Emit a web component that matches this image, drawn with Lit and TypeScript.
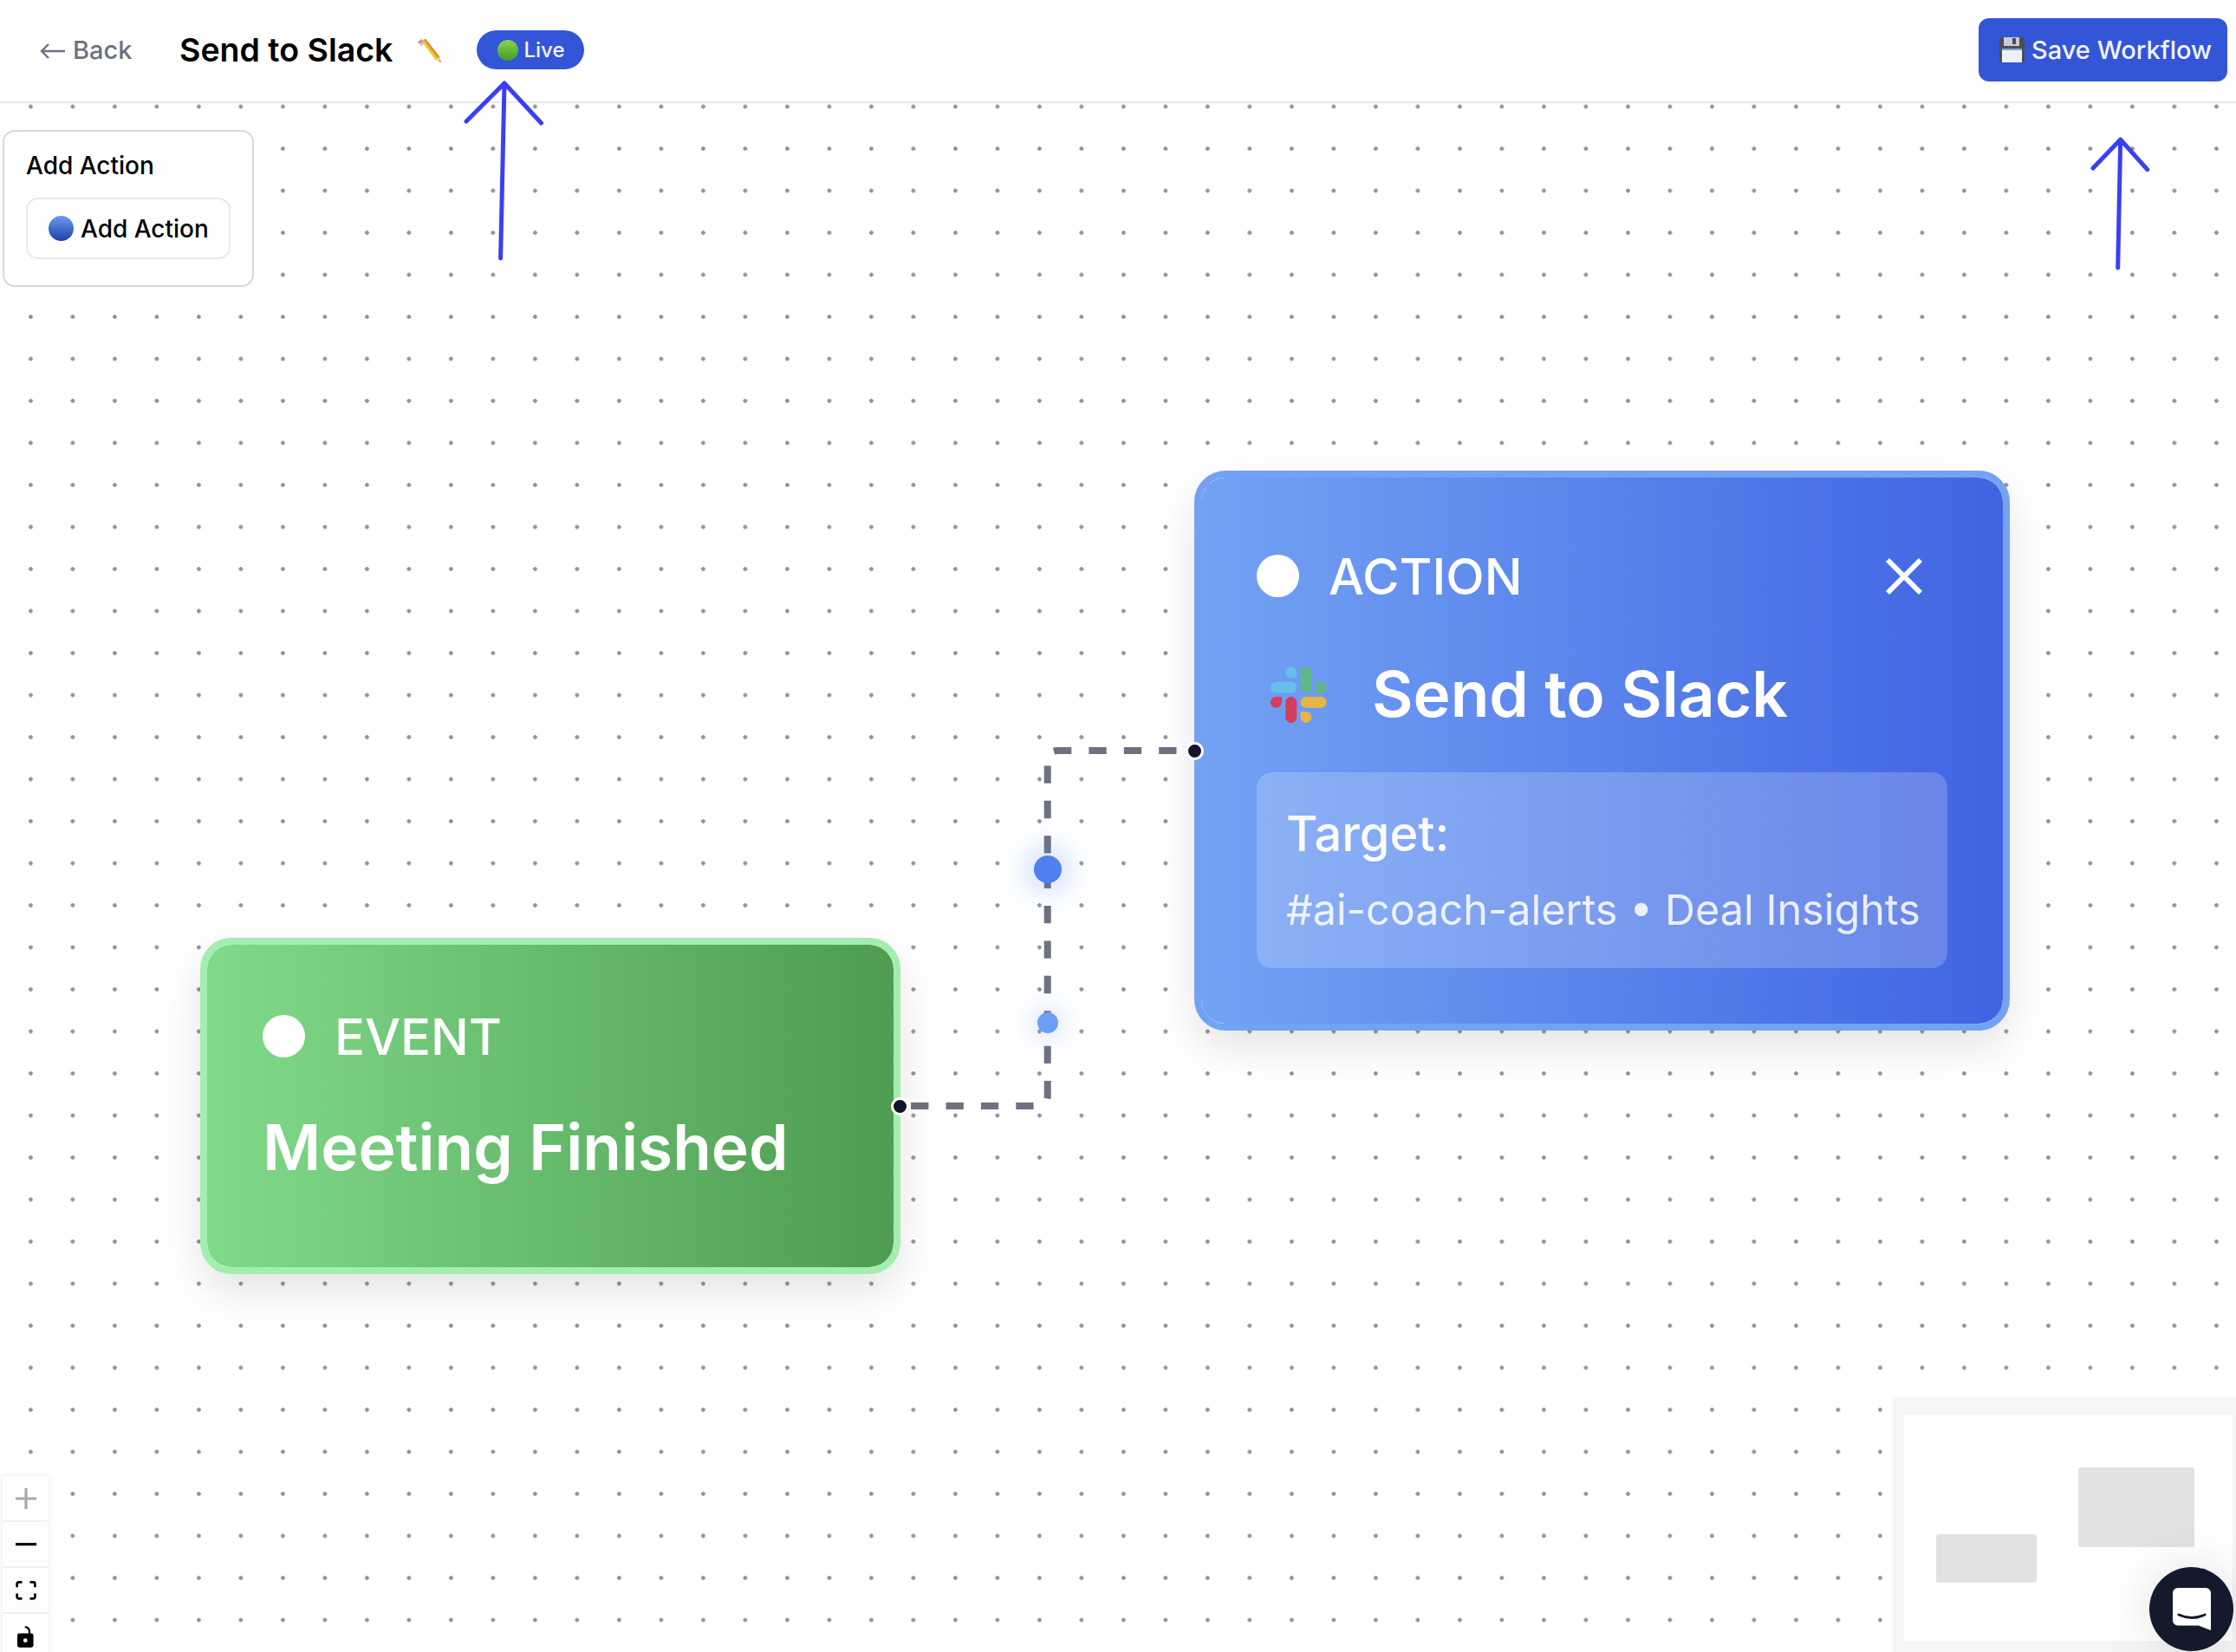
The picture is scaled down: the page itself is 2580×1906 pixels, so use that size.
import { LitElement, html, css, svg } from "lit";
import { customElement } from "lit/decorators.js";

const TOP = 119;
const edgePath = `M1038.7 ${1276 - TOP} H1196.7 Q1208.7 ${1276 - TOP} 1208.7 ${1264 - TOP} V${878 - TOP} Q1208.7 ${866 - TOP} 1220.7 ${866 - TOP} H1378.3`;

const slack = html`<svg class="slack" viewBox="0 0 54 54" aria-hidden="true">
  <path fill="#66bfea" d="M19.712.133a5.381 5.381 0 0 0-5.376 5.387 5.381 5.381 0 0 0 5.376 5.386h5.376V5.52A5.381 5.381 0 0 0 19.712.133m0 14.365H5.376A5.381 5.381 0 0 0 0 19.884a5.381 5.381 0 0 0 5.376 5.387h14.336a5.381 5.381 0 0 0 5.376-5.387 5.381 5.381 0 0 0-5.376-5.386"/>
  <path fill="#5cb887" d="M53.76 19.884a5.381 5.381 0 0 0-5.376-5.386 5.381 5.381 0 0 0-5.376 5.386v5.387h5.376a5.381 5.381 0 0 0 5.376-5.387m-14.336 0V5.52A5.381 5.381 0 0 0 34.048.133a5.381 5.381 0 0 0-5.376 5.387v14.364a5.381 5.381 0 0 0 5.376 5.387 5.381 5.381 0 0 0 5.376-5.387"/>
  <path fill="#e5b546" d="M34.048 54a5.381 5.381 0 0 0 5.376-5.387 5.381 5.381 0 0 0-5.376-5.386h-5.376v5.386A5.381 5.381 0 0 0 34.048 54m0-14.365h14.336a5.381 5.381 0 0 0 5.376-5.386 5.381 5.381 0 0 0-5.376-5.387H34.048a5.381 5.381 0 0 0-5.376 5.387 5.381 5.381 0 0 0 5.376 5.386"/>
  <path fill="#d43d5e" d="M0 34.249a5.381 5.381 0 0 0 5.376 5.386 5.381 5.381 0 0 0 5.376-5.386v-5.387H5.376A5.381 5.381 0 0 0 0 34.25m14.336-.001v14.364A5.381 5.381 0 0 0 19.712 54a5.381 5.381 0 0 0 5.376-5.387V34.25a5.381 5.381 0 0 0-5.376-5.387 5.381 5.381 0 0 0-5.376 5.387"/>
</svg>`;

const pencil = html`<svg class="pencil" viewBox="0 0 28 28" aria-hidden="true">
  <path fill="#f4c430" d="M5.5 3.5 L10 .8 L26 21 L27.5 27.5 L21.5 25 Z"/>
  <path fill="#d9932a" d="M8 2 L10 .8 L26 21 L27.5 27.5 Z"/>
  <path fill="#e8838e" d="M1 4.5 L5.5 1 L7.5 3.4 L3 7 Z"/>
  <path fill="#c4c7cc" d="M3 7 L7.5 3.4 L9.5 5.8 L5 9.4 Z"/>
  <path fill="#f4d9a8" d="M22.5 24.8 L26 21.6 L27.5 27.5 Z"/>
  <path fill="#333" d="M25.7 26.5 L27 25.4 L27.5 27.5 Z"/>
</svg>`;

const floppy = html`<svg class="floppy" viewBox="0 0 29 29" aria-hidden="true">
  <rect width="29" height="29" rx="1" fill="#4b4e56"/>
  <rect x="5" y="0" width="18" height="10" fill="#c9cbd0"/>
  <rect x="15" y="1" width="4" height="7" fill="#4b4e56"/>
  <rect x="3" y="13" width="23" height="16" fill="#eef0f3"/>
  <rect x="3" y="13" width="23" height="2" fill="#86a5d8"/>
</svg>`;

@customElement("app-root")
export class AppRoot extends LitElement {
  static styles = css`
    :host {
      display: flex;
      flex-direction: column;
      position: relative;
      width: 100vw;
      height: 100vh;
      overflow: hidden;
      background: #fff;
      font-family: Inter, "Liberation Sans", sans-serif;
      color: #000;
    }
    .header {
      flex: none;
      box-sizing: border-box;
      height: 119px;
      border-bottom: 2px solid #e8e8ea;
      padding: 0 10px 2px 46px;
      display: flex;
      align-items: center;
      background: #fff;
    }
    .back {
      display: flex;
      align-items: center;
      gap: 8px;
      font-size: 29px;
      font-weight: 500;
      color: #6b7280;
      width: 161px;
    }
    .back svg { width: 30px; height: 20px; margin-top: 3px; }
    .title {
      font-size: 37.5px;
      font-weight: 600;
      line-height: 1;
    }
    .pencil { width: 28px; height: 28px; margin-left: 28px; }
    .live {
      margin-left: 41px;
      box-sizing: border-box;
      height: 45px;
      width: 124px;
      border-radius: 23px;
      background: #3355d8;
      color: #f2f4ff;
      font-size: 24px;
      font-weight: 500;
      display: flex;
      align-items: center;
      padding-left: 24px;
      gap: 6px;
    }
    .emoji { flex: none; border-radius: 50%; display: block; }
    .emoji.green { width: 24px; height: 24px; background: linear-gradient(180deg, #8bd44a, #3f9a25); }
    .emoji.blue { width: 29px; height: 29px; background: linear-gradient(180deg, #6b9bf2, #1e3fa8); }
    .save {
      margin-left: auto;
      box-sizing: border-box;
      height: 73px;
      width: 287px;
      border-radius: 12px;
      background: #3355d8;
      color: #f2f4ff;
      font-size: 29px;
      font-weight: 500;
      display: flex;
      align-items: center;
      padding-left: 24px;
      gap: 8px;
    }
    .floppy { width: 29px; height: 29px; flex: none; }
    .canvas {
      flex: 1;
      position: relative;
      overflow: hidden;
      background-color: #fff;
      background-image: radial-gradient(circle, #92929a 2px, rgba(146, 146, 154, 0) 2.6px);
      background-size: 48.5px 48.5px;
      background-position: 11.15px -20.25px;
    }
    .edges {
      position: absolute;
      left: 0;
      top: 0;
      width: 2580px;
      height: 1787px;
      overflow: visible;
    }
    .edge { fill: none; stroke: #6e7280; stroke-width: 8; stroke-dasharray: 20.3 20.1; stroke-dashoffset: 28; }
    .node {
      position: absolute;
      box-sizing: border-box;
      border-radius: 36px;
      border: 8px solid;
      padding: 64px 64px 0;
      color: #fff;
      box-shadow: 0 20px 50px rgba(0, 0, 0, 0.11);
    }
    .node.event {
      left: 231px;
      top: 963px;
      width: 808px;
      height: 388px;
      border-color: #a3edb0;
      background: linear-gradient(90deg, #80da8a, #4e9c50) padding-box;
    }
    .node.action {
      left: 1378px;
      top: 424px;
      width: 941px;
      height: 646px;
      border-color: #73a2f4;
      background: linear-gradient(90deg, #73a2f4, #4064e2) padding-box;
    }
    .row { display: flex; align-items: center; gap: 34px; height: 83px; }
    .action .row { height: 99px; }
    .bullet { width: 49px; height: 49px; border-radius: 50%; background: #fff; flex: none; }
    .kind { font-size: 58px; font-weight: 500; line-height: 1; }
    .close { margin-left: auto; margin-right: 28px; width: 44px; height: 44px; display: block; }
    .name {
      margin-top: 36px;
      font-size: 73px;
      font-weight: 600;
      line-height: 102px;
    }
    .name-row { display: flex; align-items: center; gap: 52px; margin-top: 36px; padding-left: 16px; }
    .name-row .name { margin-top: 0; }
    .slack { width: 65px; height: 65px; flex: none; }
    .target {
      margin-top: 39px;
      box-sizing: border-box;
      height: 226px;
      border-radius: 18px;
      background: rgba(255, 255, 255, 0.2);
      padding: 32px 34px 0;
    }
    .target-label { font-size: 56px; font-weight: 500; line-height: 78px; color: rgba(255, 255, 255, 0.95); }
    .target-value { margin-top: 15px; font-size: 48.5px; line-height: 68px; color: rgba(255, 255, 255, 0.85); white-space: nowrap; }
    .handle {
      position: absolute;
      box-sizing: border-box;
      width: 21px;
      height: 21px;
      border-radius: 50%;
      background: #14142a;
      border: 3px solid #fff;
    }
    .handle.out { left: 1028.2px; top: 1146.5px; }
    .handle.in { left: 1367.8px; top: 736.5px; }
    .pulse { position: absolute; border-radius: 50%; }
    .pulse.one {
      left: 1192.5px;
      top: 868px;
      width: 32.4px;
      height: 32.4px;
      background: #5080f0;
      box-shadow: 0 0 36px 6px rgba(80, 128, 240, 0.38);
    }
    .pulse.two {
      left: 1196.7px;
      top: 1049.3px;
      width: 24px;
      height: 24px;
      background: #6c9ff4;
      box-shadow: 0 0 28px 5px rgba(108, 159, 244, 0.32);
    }
    .panel {
      position: absolute;
      left: 3px;
      top: 31px;
      box-sizing: border-box;
      width: 290px;
      height: 181px;
      background: #fff;
      border: 2px solid #d6d7df;
      border-radius: 14px;
      padding: 14px 25px 0;
    }
    .panel-title { font-size: 28px; font-weight: 500; line-height: 50px; }
    .panel-btn {
      margin-top: 12px;
      box-sizing: border-box;
      height: 71px;
      width: 236px;
      border: 2px solid #e6e8f0;
      border-radius: 14px;
      display: flex;
      align-items: center;
      padding-left: 24px;
      gap: 8px;
      font-size: 28px;
      font-weight: 500;
    }
    .controls {
      position: absolute;
      left: 3px;
      top: 1584px;
      width: 53px;
      box-shadow: 0 0 6px rgba(0, 0, 0, 0.1);
      background: #fdfdfd;
    }
    .ctrl {
      box-sizing: border-box;
      height: 53px;
      border-bottom: 2px solid #f0f0f0;
      display: flex;
      align-items: center;
      justify-content: center;
    }
    .ctrl svg { display: block; fill: #000; }
    .ctrl .plus { width: 24px; height: 24px; fill: #a8a8a8; }
    .ctrl .minus { width: 24px; height: 4px; }
    .ctrl .fit { width: 24px; height: 22px; }
    .ctrl .lock { width: 19px; height: 25px; margin-top: 2px; }
    .minimap {
      position: absolute;
      right: 0;
      bottom: 0;
      box-sizing: border-box;
      width: 396px;
      height: 294px;
      background: #f5f5f5;
      padding: 21px 4px 13px 13px;
    }
    .minimap-inner {
      position: relative;
      width: 100%;
      height: 100%;
      background: #fff;
    }
    .mini { position: absolute; background: #e2e2e2; border-radius: 3px; }
    .mini.a { left: 37px; top: 137px; width: 116px; height: 56px; }
    .mini.b { left: 201px; top: 60px; width: 134px; height: 92px; }
    .chat {
      position: absolute;
      right: 3px;
      bottom: 1.5px;
      width: 97px;
      height: 97px;
      border-radius: 50%;
      background: #141a2b;
      box-shadow: 0 0 60px rgba(0, 0, 0, 0.13);
      display: flex;
      align-items: center;
      justify-content: center;
    }
    .chat svg { width: 44px; height: 49px; display: block; }
    .arrows {
      position: absolute;
      left: 0;
      top: 0;
      width: 2580px;
      height: 1906px;
      pointer-events: none;
    }
    .arrows path { fill: none; stroke: #3a3ff5; stroke-width: 5; stroke-linecap: round; stroke-linejoin: round; }
  `;

  render() {
    return html`
      <header class="header">
        <div class="back">
          <svg viewBox="0 0 30 20" aria-hidden="true"><path d="M29 10 H2 M10 2 L2 10 L10 18" fill="none" stroke="#6b7280" stroke-width="2.4"/></svg>
          <span>Back</span>
        </div>
        <div class="title">Send to Slack</div>
        ${pencil}
        <div class="live"><i class="emoji green"></i><span>Live</span></div>
        <div class="save">${floppy}<span>Save Workflow</span></div>
      </header>
      <main class="canvas">
        <svg class="edges" viewBox="0 0 2580 1787" aria-hidden="true">
          ${svg`<path class="edge" d=${edgePath}></path>`}
        </svg>
        <section class="node event">
          <div class="row"><span class="bullet"></span><span class="kind">EVENT</span></div>
          <div class="name">Meeting Finished</div>
        </section>
        <section class="node action">
          <div class="row">
            <span class="bullet"></span><span class="kind">ACTION</span>
            <svg class="close" viewBox="0 0 44 44" aria-hidden="true"><path d="M3 3 L41 41 M41 3 L3 41" stroke="#fff" stroke-width="6" fill="none"/></svg>
          </div>
          <div class="name-row">${slack}<div class="name">Send to Slack</div></div>
          <div class="target">
            <div class="target-label">Target:</div>
            <div class="target-value">#ai-coach-alerts • Deal Insights</div>
          </div>
        </section>
        <span class="handle out"></span>
        <span class="handle in"></span>
        <span class="pulse one"></span>
        <span class="pulse two"></span>
        <aside class="panel">
          <div class="panel-title">Add Action</div>
          <div class="panel-btn"><i class="emoji blue"></i><span>Add Action</span></div>
        </aside>
        <nav class="controls">
          <div class="ctrl"><svg class="plus" viewBox="0 0 32 32"><path d="M32 18.133H18.133V32h-4.266V18.133H0v-4.266h13.867V0h4.266v13.867H32z"/></svg></div>
          <div class="ctrl"><svg class="minus" viewBox="0 0 32 5"><path d="M0 0h32v4.2H0z"/></svg></div>
          <div class="ctrl"><svg class="fit" viewBox="0 0 32 30"><path d="M3.692 4.63c0-.53.4-.938.939-.938h5.215V0H4.708C2.13 0 0 2.054 0 4.63v5.216h3.692V4.631zM27.354 0h-5.2v3.692h5.17c.53 0 .984.4.984.939v5.215H32V4.631A4.624 4.624 0 0027.354 0zm.954 24.83c0 .532-.4.94-.939.94h-5.215v3.768h5.215c2.577 0 4.631-2.13 4.631-4.707v-5.139h-3.692v5.139zm-23.677.94c-.531 0-.939-.4-.939-.94v-5.138H0v5.139c0 2.577 2.13 4.707 4.708 4.707h5.138V25.77H4.631z"/></svg></div>
          <div class="ctrl"><svg class="lock" viewBox="0 0 25 32"><path d="M21.333 10.667H19.81V7.619C19.81 3.429 16.38 0 12.19 0c-1.714 0-1.37 2.133.305 2.438 1.676.305 4.42 2.59 4.42 5.181v3.048H3.047A3.056 3.056 0 000 13.714v15.238A3.056 3.056 0 003.048 32h18.285a3.056 3.056 0 003.048-3.048V13.714a3.056 3.056 0 00-3.048-3.047zM12.19 24.533a3.056 3.056 0 01-3.047-3.047 3.056 3.056 0 013.047-3.048 3.056 3.056 0 013.048 3.048 3.056 3.056 0 01-3.048 3.047z"/></svg></div>
        </nav>
        <div class="minimap">
          <div class="minimap-inner"><span class="mini a"></span><span class="mini b"></span></div>
        </div>
        <div class="chat">
          <svg viewBox="0 0 44 49" aria-hidden="true">
            <path fill="#fff" d="M6 0 H38 a6 6 0 0 1 6 6 V49 L30 43.5 H6 a6 6 0 0 1 -6 -6 V6 a6 6 0 0 1 6 -6 Z"/>
            <path fill="none" stroke="#141a2b" stroke-width="3" stroke-linecap="round" d="M7 31 Q22 38 37 31"/>
          </svg>
        </div>
      </main>
      <svg class="arrows" viewBox="0 0 2580 1906" aria-hidden="true">
        <path d="M577.6 298 L582 96 M538 140 L582 96 L624.5 142"/>
        <path d="M2443.7 309 L2446.7 161 M2415 194 L2446.7 161 L2477.7 195.7"/>
      </svg>
    `;
  }
}
